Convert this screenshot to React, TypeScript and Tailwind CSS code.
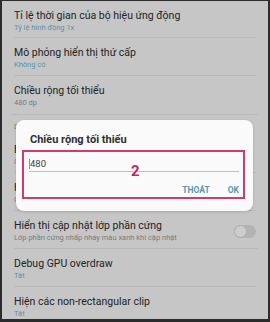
import React from 'react';

type Row = {
  title: string;
  sub: string;
  subTone: 'blue' | 'grey';
  toggle?: boolean;
  last?: boolean;
};

const topRows: Row[] = [
  { title: 'Tỉ lệ thời gian của bộ hiệu ứng động', sub: 'Tỷ lệ hình động 1x', subTone: 'blue' },
  { title: 'Mô phỏng hiển thị thứ cấp', sub: 'Không có', subTone: 'blue' },
  { title: 'Chiều rộng tối thiểu', sub: '480 dp', subTone: 'grey', last: true },
];

const bottomRows: Row[] = [
  { title: 'Bắt buộc hiển thị GPU', sub: 'Chỉ sử dụng GPU cho bản vẽ 2D', subTone: 'grey' },
  { title: 'Hiện cập nhật chế độ xem GPU', sub: 'Cửa sổ nháy sáng khi được vẽ bằng GPU', subTone: 'grey' },
  {
    title: 'Hiển thị cập nhật lớp phần cứng',
    sub: 'Lớp phần cứng nhấp nháy màu xanh khi cập nhật',
    subTone: 'grey',
    toggle: true,
  },
  { title: 'Debug GPU overdraw', sub: 'Tắt', subTone: 'blue' },
  { title: 'Hiện các non-rectangular clip', sub: 'Tắt', subTone: 'blue', last: true },
];

const SettingRow: React.FC<{ row: Row; first?: boolean }> = ({ row, first }) => (
  <div className={`flex items-start justify-between ${first ? 'h-[37px]' : 'h-[38px]'} px-[12px]`}>
    <div className={`flex h-full flex-1 flex-col pt-[8px] ${row.last ? '' : 'border-b border-[#b9b9b9]'}`}>
      <div className="text-[10.5px] leading-[13px] text-[#232323] whitespace-nowrap">{row.title}</div>
      <div
        className={`mt-[1px] text-[7.5px] leading-[10px] whitespace-nowrap ${
          row.subTone === 'blue' ? 'text-[#5b92aa]' : 'text-[#7c7c7c]'
        }`}
      >
        {row.sub}
      </div>
    </div>
    {row.toggle && (
      <div className="mt-[14px] -ml-[24px] flex h-[13px] w-[22px] items-center rounded-full bg-[#b3b3b3]">
        <div className="h-[13px] w-[13px] rounded-full border border-[#adadad] bg-[#cdcdcd]" />
      </div>
    )}
  </div>
);

export default function App() {
  return (
    <div
      className="relative h-[322px] w-[270px] overflow-hidden border-t-[1px] border-l-[2px] border-r-[2px] border-b-[3px] border-[#2b2b2b] bg-[#c6c6c6]"
      style={{ fontFamily: 'Roboto, "Noto Sans", Arial, sans-serif' }}
    >
      <div className="flex flex-col">
        {topRows.map((r, i) => (
          <SettingRow key={r.title} row={r} first={i === 0} />
        ))}
        <div className="mx-[10px] border-t border-[#b9b9b9]" />
        <div className="flex h-[20px] items-end px-[12px] pb-[3px] text-[7.5px] leading-[10px] text-[#7c7c7c]">
          Dựng hình tăng tốc phần cứng
        </div>
        {bottomRows.map((r) => (
          <SettingRow key={r.title} row={r} />
        ))}
      </div>

      {/* dialog */}
      <div className="absolute left-[14px] top-[119px] h-[91px] w-[237px] rounded-[8px] bg-[#fafafa] shadow-[0_1px_3px_rgba(0,0,0,0.15)]">
        <div className="pl-[14px] pt-[13px] text-[11px] font-bold leading-[14px] text-[#303030]">
          Chiều rộng tối thiểu
        </div>
        <div className="relative ml-[6px] mt-[3px] h-[49px] w-[223px] border-2 border-[#d23b70]">
          <div className="flex items-center pl-[5px] pt-[6px]">
            <div className="h-[10px] w-[1px] bg-[#5ba6c6]" />
            <span className="text-[9.5px] leading-[12px] text-[#444]">480</span>
          </div>
          <div className="ml-[5px] mr-[4px] mt-[1px] h-[1px] bg-[#9ccbdc]" />
          <div className="flex justify-end gap-[18px] pr-[4px] pt-[13px] text-[8.5px] font-bold leading-[10px] text-[#5a98b2]">
            <span>THOÁT</span>
            <span>OK</span>
          </div>
          <span
            className="absolute left-[107px] top-[12px] text-[15px] font-bold leading-[15px] text-[#c8215f]"
            style={{ textShadow: '0 0 2px #fff, 0 0 2px #fff, 0 0 1px #fff' }}
          >
            2
          </span>
        </div>
      </div>
    </div>
  );
}
